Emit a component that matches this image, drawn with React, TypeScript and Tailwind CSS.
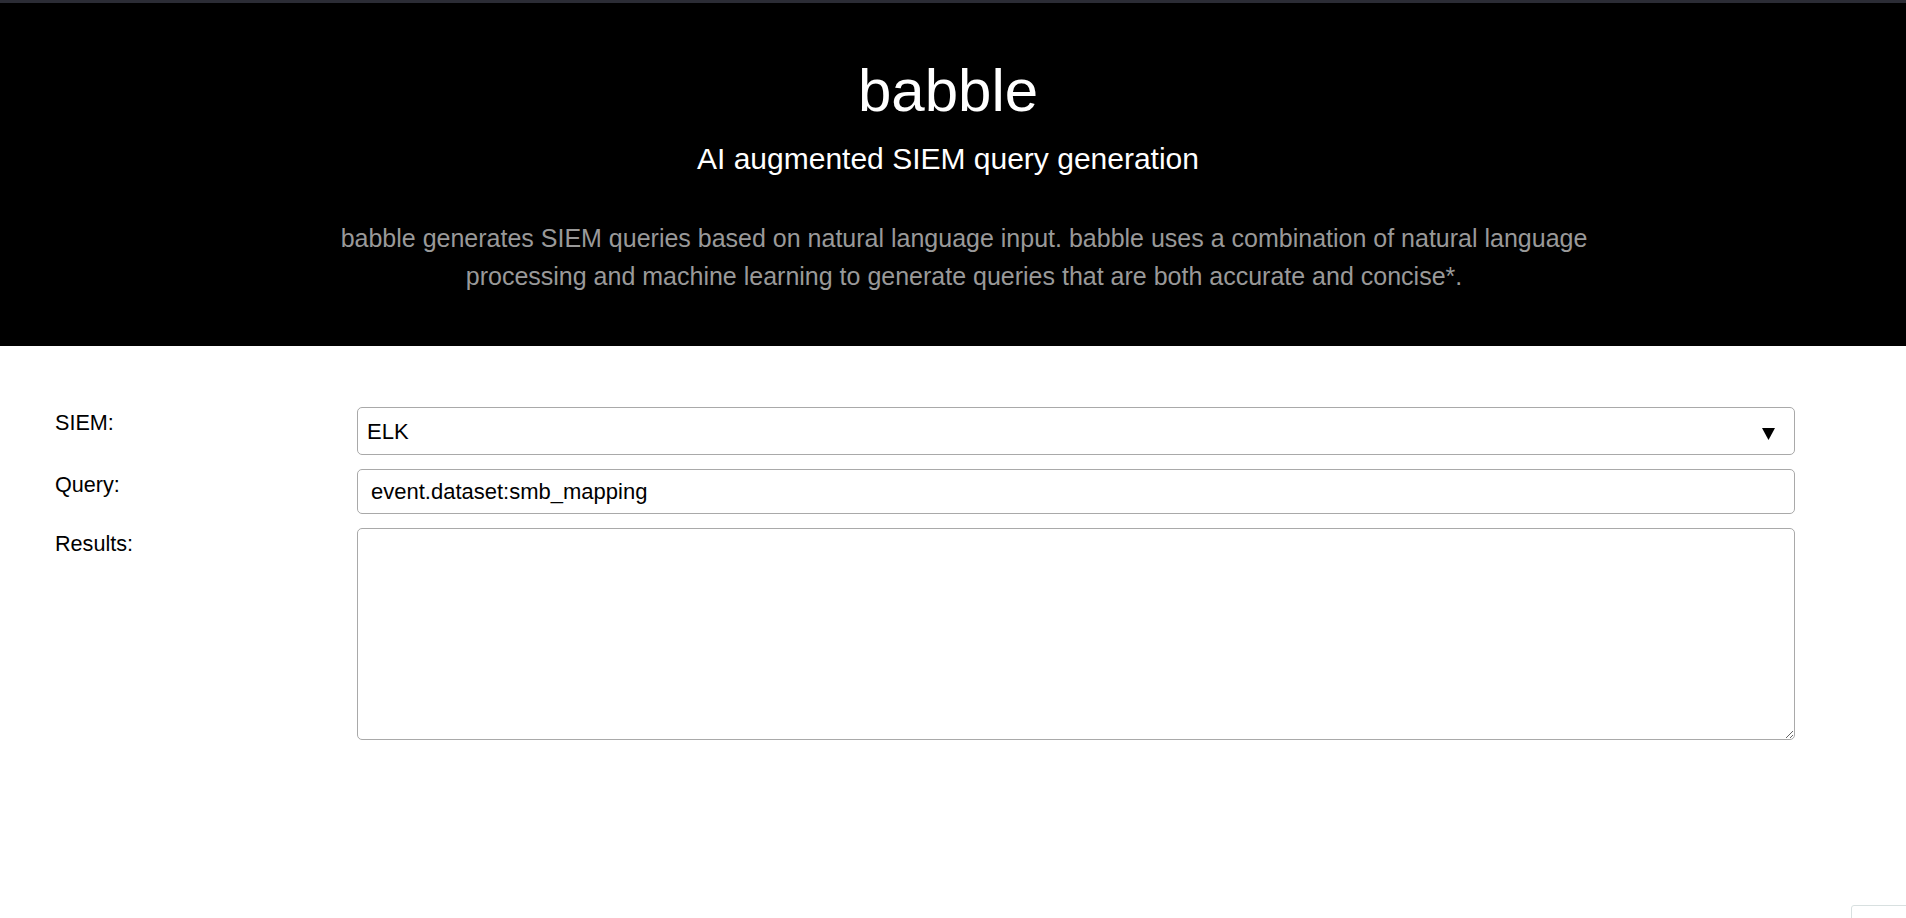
import { useState } from "react";

const SIEMS = ["ELK", "Splunk", "QRadar", "Sentinel"];

function Field({ label, children }: { label: string; children: React.ReactNode }) {
  return (
    <>
      <label className="text-[21.6px] text-black">{label}</label>
      <div>{children}</div>
    </>
  );
}

export default function App() {
  const [siem, setSiem] = useState("ELK");
  const [query, setQuery] = useState("event.dataset:smb_mapping");
  const [results, setResults] = useState("");

  return (
    <div className="relative min-h-screen bg-white font-['Liberation_Sans',Arial,sans-serif]">
      <div className="h-[3px] bg-[#2b2c35]" />

      <header className="bg-black pt-[58px] pb-[51px] text-center">
        <div className="pr-[10px]">
          <h1 className="text-[60px] leading-none text-white">babble</h1>
          <h2 className="mt-[23px] text-[30px] leading-none text-white">AI augmented SIEM query generation</h2>
        </div>
        <div className="mt-[46px] pl-[22px]">
          <p className="mx-auto max-w-[1290px] text-[25px] leading-[37.5px] text-[#999]">
            babble generates SIEM queries based on natural language input. babble uses a combination of natural language
            processing and machine learning to generate queries that are both accurate and concise*.
          </p>
        </div>
      </header>

      <form
        className="grid grid-cols-[302px_1fr] gap-y-[14px] pt-[61px] pr-[111px] pl-[55px]"
        onSubmit={(e) => e.preventDefault()}
      >
        <Field label="SIEM:">
          <div className="relative">
            <select
              value={siem}
              onChange={(e) => setSiem(e.target.value)}
              className="h-[48px] w-full appearance-none rounded-[5px] border border-[#a9a9a9] bg-white pl-[9px] text-[22px] text-black outline-none"
            >
              {SIEMS.map((s) => (
                <option key={s} value={s}>
                  {s}
                </option>
              ))}
            </select>
            <svg
              className="pointer-events-none absolute top-[21px] right-[20px]"
              width="13"
              height="12"
              viewBox="0 0 13 12"
            >
              <polygon points="0,0 13,0 6.5,12" fill="#000" />
            </svg>
          </div>
        </Field>

        <Field label="Query:">
          <input
            value={query}
            onChange={(e) => setQuery(e.target.value)}
            className="h-[45px] w-full rounded-[5px] border border-[#a9a9a9] bg-white pl-[13px] text-[22px] text-black outline-none"
          />
        </Field>

        <Field label="Results:">
          <textarea
            value={results}
            onChange={(e) => setResults(e.target.value)}
            className="block h-[212px] w-full rounded-[5px] border border-[#a9a9a9] bg-white p-[10px] text-[22px] text-black outline-none"
          />
        </Field>
      </form>

      <div className="fixed top-[905px] left-[1851px] h-[40px] w-[60px] rounded-[3px] border border-[#d8e0e0] bg-white" />
    </div>
  );
}
